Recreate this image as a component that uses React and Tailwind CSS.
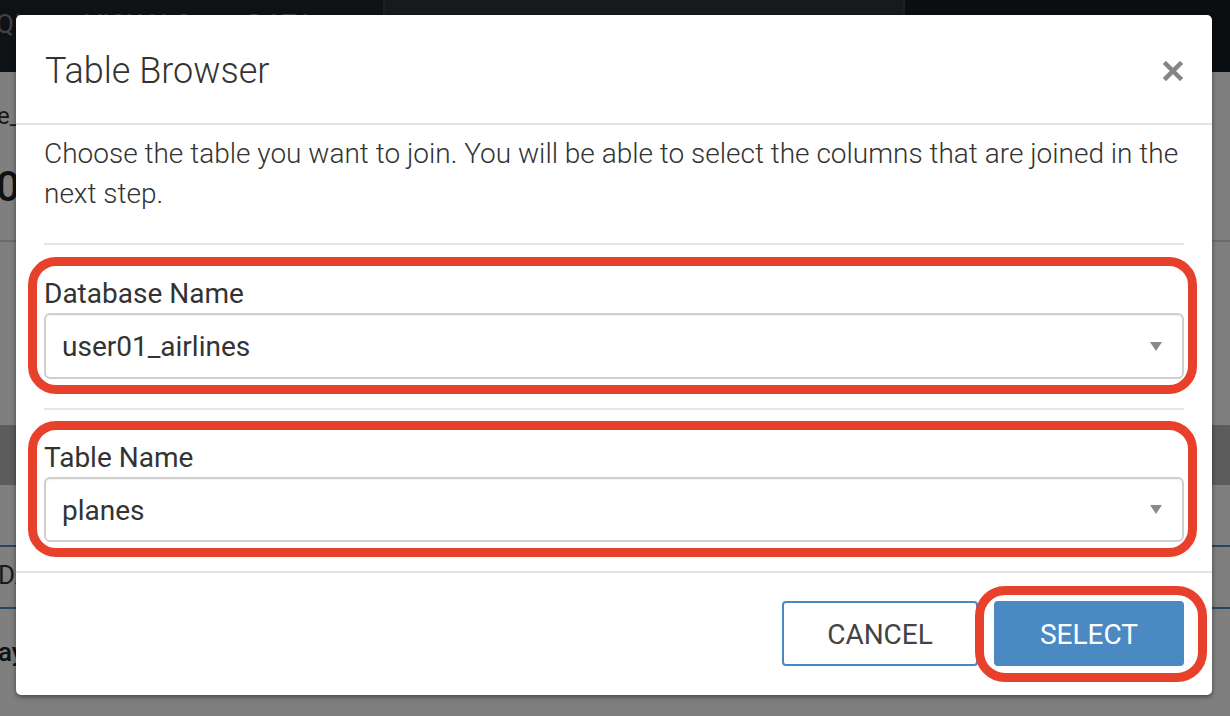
import React from "react";

function Caret() {
  return (
    <svg width="12" height="9" viewBox="0 0 12 9" className="shrink-0">
      <path d="M0 0h12L6 9z" fill="#8a8a8a" />
    </svg>
  );
}

function CloseIcon() {
  return (
    <svg width="20" height="20" viewBox="0 0 20 20">
      <path d="M3 3l14 14M17 3L3 17" stroke="#858585" strokeWidth="4.5" strokeLinecap="square" />
    </svg>
  );
}

function Ring({ className }) {
  return (
    <div
      className={`pointer-events-none absolute rounded-[28px] border-[9px] border-[#e8412b] ${className}`}
    />
  );
}

function Field({ label, value, selectHeight, className }) {
  return (
    <div className={`relative ${className}`}>
      <Ring className="-top-[21px] -bottom-[15px] -left-[16px] -right-[13px]" />
      <div className="h-[32px] text-[28px] leading-[32px] text-[#333]">{label}</div>
      <div
        className={`mt-[3px] flex items-center justify-between rounded-[6px] border-2 border-[#cfcfcf] bg-white pl-[16px] pr-[20px] shadow-[inset_0_1px_2px_rgba(0,0,0,0.06)] ${selectHeight}`}
      >
        <span className="pt-[2px] text-[28px] text-[#333]">{value}</span>
        <Caret />
      </div>
    </div>
  );
}

function BackgroundPage() {
  return (
    <div className="flex h-[716px] flex-col bg-white font-['Roboto',sans-serif]">
      <div className="flex h-[72px] shrink-0 bg-[#1c2429]">
        <div className="flex w-[383px] items-start gap-[56px] pt-[5px] text-[26px] tracking-wide text-[#80868c]">
          <span className="-ml-[4px]">QL</span>
          <span>VISUALS</span>
          <span>DATA</span>
        </div>
        <div className="w-[522px] border-x-2 border-[#3a3f44] bg-[#2e3236]" />
        <div className="flex-1 bg-[#161d22]" />
      </div>
      <div className="h-[26px]" />
      <div className="-ml-[3px] h-[30px] text-[24px] text-[#333]">e_</div>
      <div className="-ml-[4px] mt-[35px] h-[48px] text-[42px] font-medium leading-[48px] text-[#222]">
        0C
      </div>
      <div className="mt-[29px] h-[2px] bg-[#d8d8d8]" />
      <div className="h-[183px]" />
      <div className="h-[60px] bg-[#b8b8b8]" />
      <div className="h-[60px]" />
      <div className="h-[2px] bg-[#4f8cc9]" />
      <div className="-ml-[2px] h-[60px] pt-[12px] text-[26px] leading-[32px] text-[#333]">DA</div>
      <div className="h-[2px] bg-[#4f8cc9]" />
      <div className="-ml-[2px] pt-[24px] text-[26px] font-medium text-[#222]">ay</div>
    </div>
  );
}

export default function App() {
  return (
    <div className="relative h-[716px] w-[1230px] overflow-hidden font-['Roboto',sans-serif]">
      <BackgroundPage />
      <div className="absolute inset-0 bg-black/50 pl-[16px] pt-[15px]">
        <div className="w-[1196px] rounded-[5px] bg-white shadow-[0_2px_5px_rgba(0,0,0,0.45)]">
          <div className="flex h-[110px] items-center justify-between border-b-2 border-[#dfe2e6] pl-[29px] pr-[29px] pt-[3px]">
            <h1 className="text-[36px] font-light text-[#333]">Table Browser</h1>
            <CloseIcon />
          </div>

          <div className="px-[28px] pb-[29px] pt-[9px]">
            <p className="text-[28px] font-light leading-[40px] text-[#333]">
              Choose the table you want to join. You will be able to select the columns that are
              joined in the next step.
            </p>
            <div className="mt-[29px] h-[2px] bg-[#e6e6e6]" />
            <Field
              className="mt-[33px]"
              label="Database Name"
              value="user01_airlines"
              selectHeight="h-[66px]"
            />
            <div className="mt-[29px] h-[2px] bg-[#e6e6e6]" />
            <Field
              className="mt-[32px]"
              label="Table Name"
              value="planes"
              selectHeight="h-[65px]"
            />
          </div>

          <div className="flex justify-end gap-[16px] border-t-2 border-[#dfe2e6] px-[28px] pb-[29px] pt-[28px]">
            <button className="h-[65px] w-[196px] rounded-[4px] border-2 border-[#4a88c2] bg-white pt-[2px] text-[28px] text-[#444]">
              CANCEL
            </button>
            <div className="relative">
              <Ring className="-top-[15px] -bottom-[16px] -left-[19px] -right-[23px] rounded-[30px]" />
              <button className="h-[65px] w-[190px] rounded-[4px] bg-[#4a89c2] pt-[2px] text-[28px] text-white">
                SELECT
              </button>
            </div>
          </div>
        </div>
      </div>
    </div>
  );
}
